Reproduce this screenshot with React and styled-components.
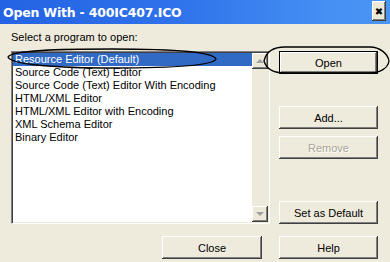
import React from 'react';
import styled, { createGlobalStyle } from 'styled-components';

const GlobalStyle = createGlobalStyle`
  html, body {
    margin: 0;
    padding: 0;
    background: #ece9d8;
  }
  body {
    font-family: "Liberation Sans", Arial, sans-serif;
    font-size: 11px;
  }
`;

const Window = styled.div`
  position: relative;
  width: 390px;
  height: 262px;
  background: #efebdc;
  overflow: hidden;
`;

const TitleBar = styled.div`
  height: 24px;
  display: flex;
  justify-content: space-between;
  padding: 0 4px 0 3px;
  background: linear-gradient(90deg, #2463e4 0%, #2f72ea 45%, #4690f4 85%, #4b95f5 100%);
`;

const Title = styled.span`
  align-self: center;
  color: #fff;
  font-family: "DejaVu Sans", Verdana, sans-serif;
  font-weight: bold;
  font-size: 12.5px;
  letter-spacing: -0.2px;
`;

const CloseBox = styled.div`
  margin-top: 1px;
  width: 14px;
  height: 20px;
  display: flex;
  align-items: center;
  justify-content: center;
  background: #ece9d8;
  box-shadow: inset -1px -1px #404040, inset 1px 1px #fff, inset -2px -2px #808080;
  color: #000;
  font-family: "DejaVu Sans", sans-serif;
  font-weight: bold;
  font-size: 10px;
`;

const Body = styled.div`
  display: grid;
  grid-template-columns: 259px 99px;
  column-gap: 9px;
  padding: 7px 0 0 11px;
`;

const Label = styled.div`
  grid-column: 1 / -1;
  height: 13px;
  line-height: 13px;
  margin-bottom: 7px;
  color: #000;
`;

const ListBox = styled.div`
  height: 173px;
  box-sizing: border-box;
  display: flex;
  background: #fff;
  border-top: 1px solid #808080;
  border-left: 1px solid #808080;
  border-right: 1px solid #fff;
  border-bottom: 1px solid #fff;
  box-shadow: inset 1px 1px #404040, inset -1px -1px #ece9d8;
  padding: 1px;
`;

const Items = styled.div`
  flex: 1;
`;

const Item = styled.div`
  height: 13px;
  line-height: 13px;
  padding-left: 2px;
  white-space: nowrap;
  overflow: hidden;
  color: ${(p) => (p.$selected ? '#fff' : '#000')};
  background: ${(p) => (p.$selected ? '#316ac5' : 'transparent')};
`;

const ScrollBar = styled.div`
  width: 16px;
  display: flex;
  flex-direction: column;
  justify-content: space-between;
  background: #eeeadb;
`;

const ScrollButton = styled.div`
  height: 16px;
  display: flex;
  align-items: center;
  justify-content: center;
  background: #ece9d8;
  box-shadow: inset -1px -1px #404040, inset 1px 1px #fff, inset -2px -2px #808080;
`;

const Arrow = styled.div`
  width: 0;
  height: 0;
  border-left: 4px solid transparent;
  border-right: 4px solid transparent;
  ${(p) => (p.$up ? 'border-bottom: 4px solid #a0a0a0;' : 'border-top: 4px solid #a0a0a0;')}
`;

const SideButtons = styled.div`
  display: flex;
  flex-direction: column;
`;

const Button = styled.div`
  box-sizing: border-box;
  height: 23px;
  width: ${(p) => p.$width || '99px'};
  margin-top: ${(p) => p.$top || 0}px;
  display: flex;
  align-items: center;
  justify-content: center;
  background: #efebdc;
  color: ${(p) => (p.$disabled ? '#a7a598' : '#000')};
  text-shadow: ${(p) => (p.$disabled ? '1px 1px #fff' : 'none')};
  box-shadow: ${(p) =>
    p.$default
      ? 'inset 0 0 0 1px #000, inset -2px -2px #404040, inset 2px 2px #fff, inset -3px -3px #808080'
      : 'inset -1px -1px #404040, inset 1px 1px #fff, inset -2px -2px #808080'};
`;

const FooterLeft = styled.div`
  display: flex;
  justify-content: flex-end;
  padding-right: 8px;
  margin-top: 12px;
`;

const FooterRight = styled.div`
  margin-top: 12px;
`;

const Marks = styled.svg`
  position: absolute;
  left: 0;
  top: 0;
  pointer-events: none;
`;

const programs = [
  'Resource Editor (Default)',
  'Source Code (Text) Editor',
  'Source Code (Text) Editor With Encoding',
  'HTML/XML Editor',
  'HTML/XML Editor with Encoding',
  'XML Schema Editor',
  'Binary Editor',
];

export default function App() {
  return (
    <>
      <GlobalStyle />
      <Window>
        <TitleBar>
          <Title>Open With - 400IC407.ICO</Title>
          <CloseBox>✖</CloseBox>
        </TitleBar>
        <Body>
          <Label>Select a program to open:</Label>
          <ListBox>
            <Items>
              {programs.map((name, i) => (
                <Item key={name} $selected={i === 0}>{name}</Item>
              ))}
            </Items>
            <ScrollBar>
              <ScrollButton><Arrow $up /></ScrollButton>
              <ScrollButton><Arrow /></ScrollButton>
            </ScrollBar>
          </ListBox>
          <SideButtons>
            <Button $default>Open</Button>
            <Button $top={32}>Add...</Button>
            <Button $top={7} $disabled>Remove</Button>
            <Button $top={42}>Set as Default</Button>
          </SideButtons>
          <FooterLeft>
            <Button $width="100px">Close</Button>
          </FooterLeft>
          <FooterRight>
            <Button>Help</Button>
          </FooterRight>
        </Body>
        <Marks width="390" height="262" viewBox="0 0 390 262">
          <path
            d="M8,57 C11,50 60,49 112,49 C170,49 213,52 216,59 C213,66 170,68 112,68 C60,68 11,65 8,57 Z"
            fill="none"
            stroke="#000"
            strokeWidth="1.3"
          />
          <path
            d="M264,61 C266,52 272,47 285,47 L370,47 C380,47 388,54 389,61 C388,68 380,73 370,73 L285,73 C272,73 266,68 264,61 Z"
            fill="none"
            stroke="#000"
            strokeWidth="1.3"
          />
        </Marks>
      </Window>
    </>
  );
}
